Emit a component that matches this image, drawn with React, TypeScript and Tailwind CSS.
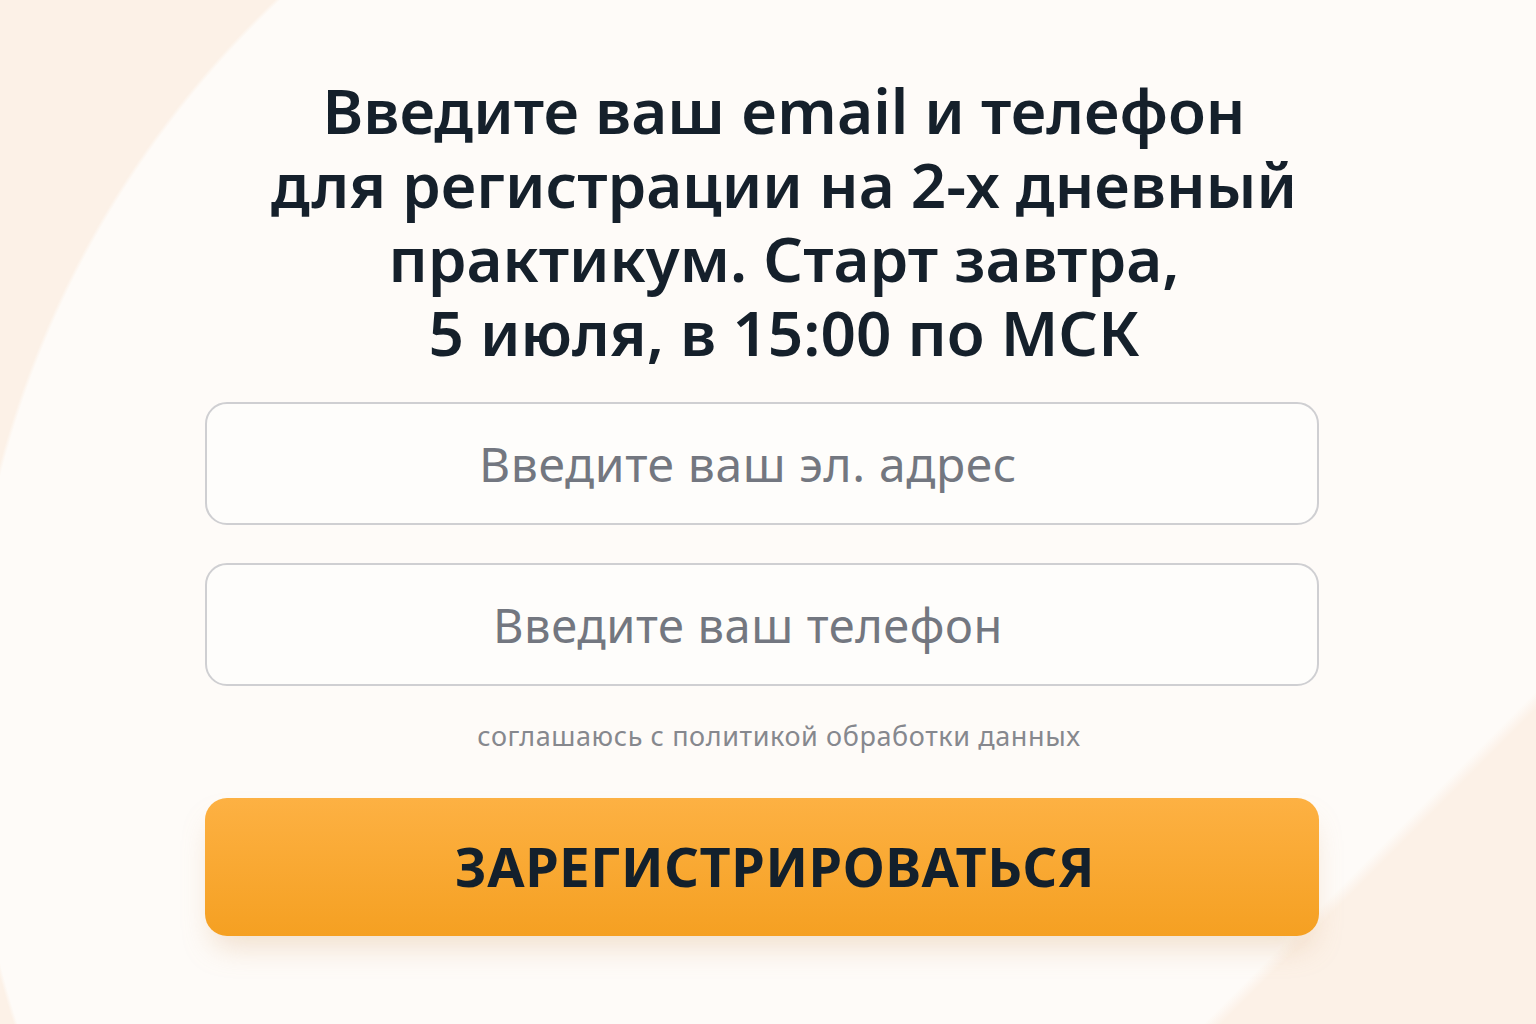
export default function App() {
  return (
    <div className="min-h-screen w-full bg-[linear-gradient(135deg,transparent_87%,#fcf1e7_87.7%),radial-gradient(circle_at_960px_720px,#fefbf8_990px,#fcf1e7_994px)] font-['Noto_Sans',sans-serif]">
      <div className="flex flex-col pt-[73px]">
        <h1 className="ml-[32px] text-center text-[62px] font-semibold leading-[74px] text-[#15202b]">
          Введите ваш email и телефон
          <br />
          для регистрации на 2-х дневный
          <br />
          практикум. Старт завтра,
          <br />
          5 июля, в 15:00 по МСК
        </h1>
        <form className="ml-[205px] mt-[33px] flex w-[1114px] flex-col" onSubmit={(e) => e.preventDefault()}>
          <input
            type="email"
            placeholder="Введите ваш эл. адрес"
            className="h-[123px] w-full rounded-[22px] border-2 border-[#cfcfd2] bg-[#fefdfb] pr-[28px] text-center text-[48px] tracking-[0.6px] text-[#5f636b] placeholder:text-[#737780] outline-none"
          />
          <input
            type="tel"
            placeholder="Введите ваш телефон"
            className="mt-[38px] h-[123px] w-full rounded-[22px] border-2 border-[#cfcfd2] bg-[#fefdfb] pr-[28px] text-center text-[47px] tracking-[0.6px] text-[#5f636b] placeholder:text-[#737780] outline-none"
          />
          <p className="mt-[30px] pl-[34px] text-center text-[27px] tracking-[0.6px] text-[#86888e]">соглашаюсь с политикой обработки данных</p>
          <button
            type="submit"
            className="mt-[41px] h-[138px] w-full rounded-[22px] bg-[linear-gradient(180deg,#fdb143,#f5a022)] pl-[26px] text-[54px] font-bold tracking-[0.5px] text-[#13202c] shadow-[0_18px_30px_-8px_rgba(214,170,120,0.35)]"
          >
            ЗАРЕГИСТРИРОВАТЬСЯ
          </button>
        </form>
      </div>
    </div>
  );
}
